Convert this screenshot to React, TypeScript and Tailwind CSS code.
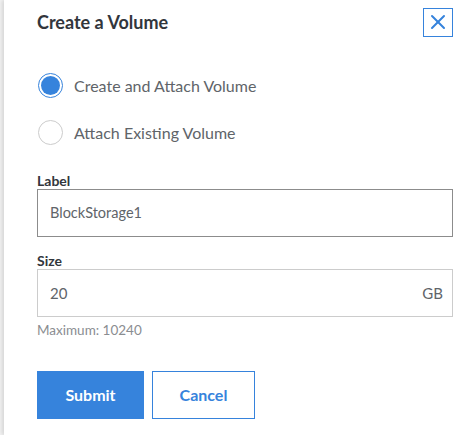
import { X } from "lucide-react";

export default function App() {
  return (
    <div className="flex h-[435px] w-full bg-white font-['Lato','Noto_Sans',sans-serif]">
      <div className="w-[4px] shrink-0 bg-[#f2f2f2]" />
      <div className="flex-1 bg-white pl-[33px] pr-[14px] shadow-[-2px_0_4px_rgba(0,0,0,0.12)]">
        <div className="mt-[8px] flex h-[29px] items-center justify-between">
          <h2 className="text-[18px] font-bold text-[#32363c]">Create a Volume</h2>
          <button className="-mt-[1px] flex h-[29px] w-[30px] items-center justify-center border border-[#3683dc] text-[#3683dc]">
            <X size={24} strokeWidth={2} />
          </button>
        </div>

        <div className="mt-[25px]">
          <label className="flex h-[47px] items-center gap-[11px]">
            <span className="ml-[1px] flex h-[25px] w-[25px] items-center justify-center rounded-full border border-[#3683dc]">
              <span className="h-[19px] w-[19px] rounded-full bg-[#3683dc]" />
            </span>
            <span className="text-[16px] text-[#606469]">Create and Attach Volume</span>
          </label>
          <label className="flex h-[47px] items-center gap-[11px]">
            <span className="ml-[1px] h-[25px] w-[25px] rounded-full border border-[#ccc]" />
            <span className="text-[16px] text-[#606469]">Attach Existing Volume</span>
          </label>
        </div>

        <div className="mt-[15px] flex h-[18px] items-center text-[14px] font-bold text-[#32363c]">Label</div>
        <div className="flex h-[48px] items-center border border-[#8c8c8c] px-[12px] text-[14.5px] text-[#606469]">
          BlockStorage1
        </div>

        <div className="mt-[14px] flex h-[18px] items-center text-[14px] font-bold text-[#32363c]">Size</div>
        <div className="flex h-[48px] items-center justify-between border border-[#ccc] px-[12px] text-[15px] text-[#606469]">
          <span>20</span>
          <span className="mr-[-3px]">GB</span>
        </div>
        <div className="mt-[5px] h-[16px] text-[13.5px] leading-[16px] text-[#8a8d91]">Maximum: 10240</div>

        <div className="mt-[33px] flex gap-[8px]">
          <button className="h-[48px] w-[107px] bg-[#3683dc] text-[16px] font-bold text-white">Submit</button>
          <button className="h-[48px] w-[103px] border border-[#3683dc] bg-white text-[16px] font-bold text-[#3683dc]">
            Cancel
          </button>
        </div>
      </div>
    </div>
  );
}
